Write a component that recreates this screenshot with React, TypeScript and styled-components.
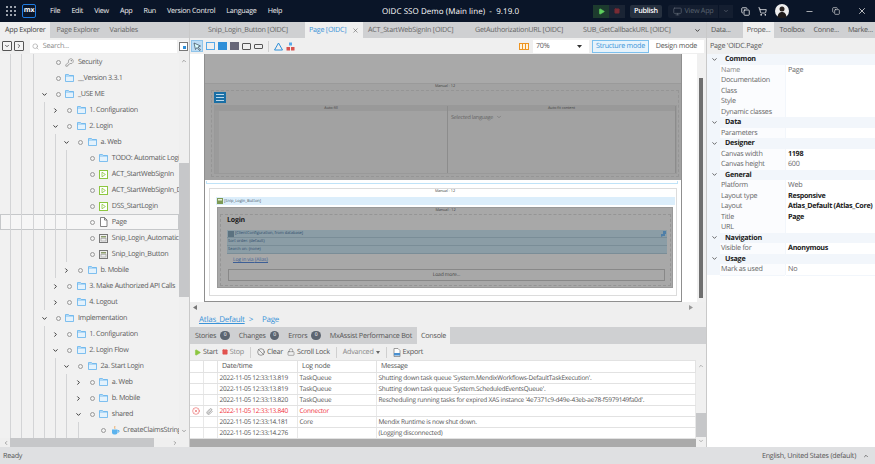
import styled, { createGlobalStyle } from 'styled-components';
import {
  Ban,
  ChevronDown,
  ChevronRight,
  ChevronUp,
  ChevronLeft,
  CircleX,
  Copy,
  KeyRound,
  Lock,
  Minus,
  Monitor,
  Paperclip,
  Play,
  Search,
  ShoppingCart,
  Square,
  X,
} from 'lucide-react';

const GlobalStyle = createGlobalStyle`
  html, body { margin: 0; padding: 0; background: #dfe0e2; }
  * { box-sizing: border-box; }
  body {
    font-family: 'Open Sans', 'Noto Sans', sans-serif;
    font-size: 7.2px;
    letter-spacing: -0.25px;
    color: #555;
    text-rendering: geometricPrecision;
  }
`;

type IconKind = 'folder' | 'flow' | 'page' | 'snip' | 'key' | 'java';

interface TreeRowData {
  depth: number;
  label: string;
  icon: IconKind;
  chevron?: 'down' | 'right';
  selected?: boolean;
}

const treeRows: TreeRowData[] = [
  { depth: 3, label: 'Security', icon: 'key' },
  { depth: 3, label: '__Version 3.3.1', icon: 'folder' },
  { depth: 3, label: '_USE ME', icon: 'folder', chevron: 'down' },
  { depth: 4, label: '1. Configuration', icon: 'folder', chevron: 'right' },
  { depth: 4, label: '2. Login', icon: 'folder', chevron: 'down' },
  { depth: 5, label: 'a. Web', icon: 'folder', chevron: 'down' },
  { depth: 6, label: 'TODO: Automatic Login', icon: 'folder' },
  { depth: 6, label: 'ACT_StartWebSignIn', icon: 'flow' },
  { depth: 6, label: 'ACT_StartWebSignIn_DeepLink', icon: 'flow' },
  { depth: 6, label: 'DSS_StartLogin', icon: 'flow' },
  { depth: 6, label: 'Page', icon: 'page', selected: true },
  { depth: 6, label: 'Snip_Login_Automatic', icon: 'snip' },
  { depth: 6, label: 'Snip_Login_Button', icon: 'snip' },
  { depth: 5, label: 'b. Mobile', icon: 'folder', chevron: 'right' },
  { depth: 4, label: '3. Make Authorized API Calls', icon: 'folder', chevron: 'right' },
  { depth: 4, label: '4. Logout', icon: 'folder', chevron: 'right' },
  { depth: 3, label: 'Implementation', icon: 'folder', chevron: 'down' },
  { depth: 4, label: '1. Configuration', icon: 'folder', chevron: 'right' },
  { depth: 4, label: '2. Login Flow', icon: 'folder', chevron: 'down' },
  { depth: 5, label: '2a. Start Login', icon: 'folder', chevron: 'down' },
  { depth: 6, label: 'a. Web', icon: 'folder', chevron: 'right' },
  { depth: 6, label: 'b. Mobile', icon: 'folder', chevron: 'right' },
  { depth: 6, label: 'shared', icon: 'folder', chevron: 'down' },
  { depth: 7, label: 'CreateClaimsString', icon: 'java' },
];

const propertySections = [
  {
    title: 'Common',
    rows: [
      ['Name', 'Page', ''],
      ['Documentation', '', ''],
      ['Class', '', ''],
      ['Style', '', ''],
      ['Dynamic classes', '', ''],
    ],
  },
  { title: 'Data', rows: [['Parameters', '', '']] },
  {
    title: 'Designer',
    rows: [
      ['Canvas width', '1198', 'bold'],
      ['Canvas height', '600', ''],
    ],
  },
  {
    title: 'General',
    rows: [
      ['Platform', 'Web', ''],
      ['Layout type', 'Responsive', 'bold'],
      ['Layout', 'Atlas_Default (Atlas_Core)', 'bold'],
      ['Title', 'Page', 'bold'],
      ['URL', '', ''],
    ],
  },
  { title: 'Navigation', rows: [['Visible for', 'Anonymous', 'bold']] },
  { title: 'Usage', rows: [['Mark as used', 'No', '']] },
];

const logRows = [
  ['2022-11-05 12:33:13.819', 'TaskQueue', "Shutting down task queue 'System.MendixWorkflows-DefaultTaskExecution'."],
  ['2022-11-05 12:33:13.819', 'TaskQueue', "Shutting down task queue 'System.ScheduledEventsQueue'."],
  ['2022-11-05 12:33:13.820', 'TaskQueue', "Rescheduling running tasks for expired XAS instance '4e7371c9-d49e-43eb-ae78-f5979149fa0d'."],
  ['2022-11-05 12:33:13.840', 'Connector', ''],
  ['2022-11-05 12:33:14.181', 'Core', 'Mendix Runtime is now shut down.'],
  ['2022-11-05 12:33:14.276', '', '(Logging disconnected)'],
];

function TreeIcon({ kind }: { kind: IconKind }) {
  if (kind === 'key') return <KeyRound size={9} color="#666" strokeWidth={1.4} />;
  if (kind === 'flow') {
    return (
      <svg width="9" height="9" viewBox="0 0 9 9">
        <rect x="0.5" y="0.5" width="8" height="8" fill="#fff" stroke="#8cc63f" />
        <path d="M3 2.2 L6.4 4.5 L3 6.8 Z" fill="none" stroke="#8cc63f" strokeWidth="0.8" />
      </svg>
    );
  }
  if (kind === 'page') {
    return (
      <svg width="9" height="10" viewBox="0 0 9 10">
        <path d="M1.500.5h4l2.500 2.500v6.500h-6.500z" fill="#fff" stroke="#666" strokeWidth="0.8" />
        <path d="M5.500.5v2.500h2.500" fill="none" stroke="#666" strokeWidth="0.8" />
      </svg>
    );
  }
  if (kind === 'snip') {
    return (
      <svg width="9" height="9" viewBox="0 0 9 9">
        <rect x="0.500" y="0.500" width="8" height="8" fill="#eee" stroke="#777" />
        <rect x="2" y="2" width="5" height="1.500" fill="#8a9a6a" />
        <rect x="2" y="4.500" width="5" height="2.500" fill="none" stroke="#999" strokeWidth="0.600" />
      </svg>
    );
  }
  if (kind === 'java') {
    return (
      <svg width="9" height="10" viewBox="0 0 9 10">
        <path d="M1 4.500h5.500v3a2 2 0 0 1-2 2h-1.500a2 2 0 0 1-2-2z" fill="#5cb3ee" />
        <path d="M6.500 5.500h1.500v1.500h-1.500" fill="none" stroke="#5cb3ee" />
        <path d="M3.500 1c1 1-.5 1.500.5 2.800" fill="none" stroke="#e9973a" strokeWidth="0.800" />
      </svg>
    );
  }
  return (
    <svg width="9" height="8" viewBox="0 0 9 8">
      <path d="M.5.500h3l.800 1h4.200v6h-8z" fill="#e4f2fc" stroke="#62b3ee" strokeWidth="0.800" />
      <path d="M.5 2h8" stroke="#62b3ee" strokeWidth="0.800" />
    </svg>
  );
}

function TreeRow({ row }: { row: TreeRowData }) {
  return (
    <Row $selected={row.selected}>
      {Array.from({ length: row.depth }, (_, i) => (
        <Guide key={i} />
      ))}
      <Twist>
        {row.chevron === 'down' && <ChevronDown size={7} color="#222" strokeWidth={3} />}
        {row.chevron === 'right' && <ChevronRight size={7} color="#222" strokeWidth={3} />}
      </Twist>
      <Dot />
      <RowIcon>
        <TreeIcon kind={row.icon} />
      </RowIcon>
      <RowLabel>{row.label}</RowLabel>
    </Row>
  );
}

export default function App() {
  return (
    <Shell>
      <GlobalStyle />
      <TitleBar>
        <Waffle>
          {Array.from({ length: 9 }, (_, i) => (
            <i key={i} />
          ))}
        </Waffle>
        <Logo>mx</Logo>
        <Menu>
          {['File', 'Edit', 'View', 'App', 'Run', 'Version Control', 'Language', 'Help'].map((m) => (
            <span key={m}>{m}</span>
          ))}
        </Menu>
        <AppTitle>OIDC SSO Demo (Main line)&nbsp; -&nbsp; 9.19.0</AppTitle>
        <RunGroup>
          <RunButton $tone="#1d3b2e">
            <Play size={7} color="#5ed05e" fill="#5ed05e" />
          </RunButton>
          <RunButton $tone="#1a2434">
            <Square size={6} color="#7a2c35" fill="#7a2c35" />
          </RunButton>
        </RunGroup>
        <Publish>Publish</Publish>
        <ViewApp>
          <Monitor size={9} color="#59626f" />
          View App
        </ViewApp>
        <ViewAppArrow>
          <ChevronDown size={6} color="#59626f" strokeWidth={3} />
        </ViewAppArrow>
        <TitleIcons>
          <Copy size={9} color="#fff" />
          <ShoppingCart size={9} color="#fff" />
          <Avatar>
            <svg width="14" height="14" viewBox="0 0 14 14">
              <circle cx="7" cy="7" r="7" fill="#eee" />
              <circle cx="7" cy="5" r="2.500" fill="#2a2320" />
              <path d="M2.500 13c.5-4 2.500-5 4.500-5s4 1 4.500 5a7 7 0 0 1-9 0z" fill="#1e1a1a" />
            </svg>
          </Avatar>
        </TitleIcons>
        <WindowButtons>
          <Minus size={9} color="#ddd" />
          <Copy size={8} color="#ddd" />
          <X size={10} color="#ddd" />
        </WindowButtons>
      </TitleBar>

      <Workspace>
        <LeftPanel>
          <TabStrip>
            <PanelTab $active>App Explorer</PanelTab>
            <PanelTab>Page Explorer</PanelTab>
            <PanelTab>Variables</PanelTab>
          </TabStrip>
          <ExplorerTools>
            <SquareTool>
              <ChevronDown size={6} color="#333" strokeWidth={3} />
            </SquareTool>
            <SquareTool>
              <ChevronRight size={6} color="#333" strokeWidth={3} />
            </SquareTool>
            <SearchBox>
              <Search size={7} color="#999" />
              Search...
            </SearchBox>
            <SquareTool $flat>
              <svg width="9" height="9" viewBox="0 0 9 9">
                <rect x="0.500" y="0.500" width="8" height="8" fill="#fff" stroke="#777" />
                <rect x="4" y="4" width="3" height="3" fill="#2f8fd8" />
              </svg>
            </SquareTool>
          </ExplorerTools>
          <TreeArea>
            <TreeList>
              {treeRows.map((row, i) => (
                <TreeRow key={i} row={row} />
              ))}
            </TreeList>
            <TreeScroll>
              <ChevronUp size={6} color="#555" />
              <TreeThumb />
              <ChevronDown size={6} color="#555" />
            </TreeScroll>
          </TreeArea>
          <TreeHScroll>
            <ChevronLeft size={6} color="#555" />
            <TreeHThumb />
            <ChevronRight size={6} color="#555" />
          </TreeHScroll>
        </LeftPanel>

        <CenterPanel>
          <TabStrip>
            <DocTab $width={115} $pad={18}>Snip_Login_Button [OIDC]</DocTab>
            <DocTab $active $width={58} $pad={4}>
              Page [OIDC]
              <X size={7} color="#666" />
            </DocTab>
            <DocTab $width={112} $pad={5}>ACT_StartWebSignIn [OIDC]</DocTab>
            <DocTab $width={108} $pad={0}>GetAuthorizationURL [OIDC]</DocTab>
            <DocTab $width={100} $pad={0}>SUB_GetCallbackURL [OIDC]</DocTab>
            <TabMenu>
              <ChevronDown size={7} color="#333" strokeWidth={3} />
            </TabMenu>
          </TabStrip>
          <CanvasTools>
            <ToolPick>
              <svg width="9" height="9" viewBox="0 0 9 9">
                <path d="M1 1l6.500 3-2.500 1 2.500 3-1 .5-2.500-3-1.500 2z" fill="#dff" stroke="#345" strokeWidth="0.700" />
              </svg>
            </ToolPick>
            <ToolGlyph $color="#56a9ea" />
            <ToolGlyph $color="#2f8fd8" $filled />
            <ToolGlyph $color="#667" $filled />
            <ToolGlyph $color="#555" $wide />
            <ToolGlyph $color="#555" $wide $low />
            <ToolSep />
            <svg width="9" height="9" viewBox="0 0 9 9">
              <path d="M4.500 1L8.500 8H.5z" fill="none" stroke="#2f8fd8" strokeWidth="1" />
            </svg>
            <svg width="9" height="9" viewBox="0 0 9 9">
              <rect x="3" y="0.500" width="3" height="3" fill="#56a9ea" />
              <rect x="0.500" y="5" width="3.500" height="3.500" fill="#d8534f" />
              <rect x="5" y="5" width="3.500" height="3.500" fill="#d8534f" />
            </svg>
            <ToolSpacer />
            <svg width="10" height="7" viewBox="0 0 10 7">
              <rect x="0.500" y="0.500" width="9" height="6" fill="#fff3dd" stroke="#ee9420" />
              <path d="M3.500 1v5M6.500 1v5" stroke="#ee9420" />
            </svg>
            <ZoomSelect>
              70%
              <svg width="5" height="3" viewBox="0 0 5 3">
                <path d="M0 0h5L2.500 3z" fill="#333" />
              </svg>
            </ZoomSelect>
            <ModeButton $active>Structure mode</ModeButton>
            <ModeButton>Design mode</ModeButton>
          </CanvasTools>

          <CanvasFrame>
            <CanvasViewport>
              <PageFrame>
                <DimHeader />
                <DimSection>
                  <TinyLabel>Manual - 12</TinyLabel>
                  <DashedBox>
                    <MenuButton>
                      <i />
                      <i />
                      <i />
                    </MenuButton>
                    <AutoGrid>
                      <AutoCell $inset>
                        <TinyLabel $bar>Auto-fill</TinyLabel>
                      </AutoCell>
                      <AutoCell>
                        <TinyLabel $bar>Auto-fit content</TinyLabel>
                        <LanguageText>
                          Selected language <ChevronDown size={6} color="#666" />
                        </LanguageText>
                      </AutoCell>
                    </AutoGrid>
                  </DashedBox>
                </DimSection>
                <LightSection>
                  <BlueStrip />
                  <LightInner>
                    <TinyLabel>Manual - 12</TinyLabel>
                    <SnippetBar>
                      <svg width="6" height="6" viewBox="0 0 6 6">
                        <rect width="6" height="6" fill="#7d9a55" />
                        <rect x="1" y="1" width="4" height="1.500" fill="#e8f0d8" />
                      </svg>
                      [Snip_Login_Button]
                    </SnippetBar>
                    <LoginBox>
                      <TinyLabel>Manual - 12</TinyLabel>
                      <LoginBody>
                        <LoginTitle>Login</LoginTitle>
                        <div>
                          <ListLine>
                            <svg width="6" height="6" viewBox="0 0 6 6">
                              <rect width="6" height="6" fill="#5b7280" />
                            </svg>
                            [ClientConfiguration, from database]
                            <ListTool width="6" height="6" viewBox="0 0 6 6">
                              <path d="M3 0h3v3h-1v2h-2l-2 1v-3h2z" fill="#4f7fa8" />
                            </ListTool>
                          </ListLine>
                          <ListLine>Sort order: (default)</ListLine>
                          <ListLine>Search on: (none)</ListLine>
                        </div>
                        <LoginLink>Log in via {'{Alias}'}</LoginLink>
                        <LoadMore>Load more...</LoadMore>
                      </LoginBody>
                    </LoginBox>
                  </LightInner>
                </LightSection>
              </PageFrame>
            </CanvasViewport>
            <CanvasVScroll>
              <CanvasThumb />
            </CanvasVScroll>
          </CanvasFrame>
          <CanvasHScroll>
            <svg width="4" height="5" viewBox="0 0 4 5">
              <path d="M4 0v5L0 2.500z" fill="#777" />
            </svg>
            <svg width="4" height="5" viewBox="0 0 4 5">
              <path d="M0 0v5l4-2.500z" fill="#999" />
            </svg>
          </CanvasHScroll>

          <Breadcrumb>
            <a>Atlas_Default</a>
            <span>&gt;</span>
            <a>Page</a>
          </Breadcrumb>
          <BottomTabs>
            <BottomTab>Stories<CountBadge>0</CountBadge></BottomTab>
            <BottomTab>Changes<CountBadge>0</CountBadge></BottomTab>
            <BottomTab>Errors<CountBadge>0</CountBadge></BottomTab>
            <BottomTab>MxAssist Performance Bot</BottomTab>
            <BottomTab $active>Console</BottomTab>
          </BottomTabs>
          <ConsoleTools>
            <ConsoleTool><Play size={7} color="#8cc63f" fill="#8cc63f" />Start</ConsoleTool>
            <ConsoleTool $muted><Square size={6} color="#e2534f" fill="#e2534f" />Stop</ConsoleTool>
            <ToolSep />
            <ConsoleTool><Ban size={8} color="#444" strokeWidth={1.500} />Clear</ConsoleTool>
            <ConsoleTool><Lock size={8} color="#666" strokeWidth={1.500} />Scroll Lock</ConsoleTool>
            <ToolSep />
            <ConsoleTool $muted>
              Advanced
              <svg width="4" height="3" viewBox="0 0 4 3">
                <path d="M0 0h4L2 3z" fill="#666" />
              </svg>
            </ConsoleTool>
            <ToolSep />
            <ConsoleTool>
              <svg width="8" height="9" viewBox="0 0 8 9">
                <path d="M1 .5h4l2 2v6h-6z" fill="#fff" stroke="#777" strokeWidth="0.700" />
                <rect x="1" y="5" width="6" height="2.500" fill="#4a90d0" />
              </svg>
              Export
            </ConsoleTool>
          </ConsoleTools>
          <LogArea>
            <LogTable>
              <LogHeader>
                <span />
                <span />
                <span>Date/time</span>
                <span>Log node</span>
                <span>Message</span>
              </LogHeader>
              {logRows.map((r, i) => (
                <LogRow key={i} $error={r[1] === 'Connector'}>
                  <span>{r[1] === 'Connector' && <CircleX size={8} color="#e23b3b" strokeWidth={1.500} />}</span>
                  <span>{r[1] === 'Connector' && <Paperclip size={7} color="#777" />}</span>
                  <span>{r[0]}</span>
                  <span>{r[1]}</span>
                  <span>{r[2]}</span>
                </LogRow>
              ))}
              <LogHBar />
            </LogTable>
            <LogVScroll>
              <ChevronUp size={6} color="#777" />
              <LogThumb />
              <ChevronDown size={6} color="#777" />
            </LogVScroll>
          </LogArea>
        </CenterPanel>

        <RightPanel>
          <TabStrip>
            <SideTab>Data...</SideTab>
            <SideTab $active>Prope...</SideTab>
            <SideTab>Toolbox</SideTab>
            <SideTab>Conne...</SideTab>
            <SideTab>Marke...</SideTab>
          </TabStrip>
          <PropsTitle>Page 'OIDC.Page'</PropsTitle>
          {propertySections.map((section) => (
            <div key={section.title}>
              <SectionHead>
                <ChevronDown size={7} color="#333" strokeWidth={2.500} />
                {section.title}
              </SectionHead>
              {section.rows.map((r) => (
                <PropRow key={r[0]}>
                  <PropName $dim={r[0] === 'Name'}>{r[0]}</PropName>
                  <PropValue $bold={r[2] === 'bold'}>{r[1]}</PropValue>
                </PropRow>
              ))}
            </div>
          ))}
        </RightPanel>
      </Workspace>

      <StatusBar>
        Ready
        <StatusRight>
          English, United States (default)
          <ChevronUp size={6} color="#555" strokeWidth={3} />
        </StatusRight>
      </StatusBar>
    </Shell>
  );
}

const Shell = styled.div`
  width: 875px;
  height: 464px;
  display: flex;
  flex-direction: column;
  overflow: hidden;
`;

const TitleBar = styled.header`
  height: 22px;
  flex: none;
  position: relative;
  display: flex;
  align-items: center;
  padding-left: 6px;
  background: #0a1528;
  color: #fff;
`;

const Waffle = styled.div`
  display: grid;
  grid-template-columns: repeat(3, 2px);
  gap: 2px;
  i {
    width: 2px;
    height: 2px;
    border-radius: 50%;
    background: #cfd3da;
  }
`;

const Logo = styled.div`
  width: 14px;
  height: 14px;
  margin-left: 6px;
  border: 1px solid #1f7be0;
  border-radius: 2px;
  font-size: 7px;
  font-weight: 700;
  line-height: 11px;
  text-align: center;
  color: #fff;
`;

const Menu = styled.nav`
  display: flex;
  gap: 11px;
  margin-left: 14px;
  color: #f0f0f0;
`;

const AppTitle = styled.div`
  position: absolute;
  left: 382px;
  top: 6px;
  font-size: 8px;
  letter-spacing: 0.05px;
  white-space: nowrap;
`;

const RunGroup = styled.div`
  display: flex;
  margin-left: auto;
`;

const RunButton = styled.div<{ $tone: string }>`
  width: 16px;
  height: 13px;
  display: flex;
  align-items: center;
  justify-content: center;
  background: ${(p) => p.$tone};
`;

const Publish = styled.div`
  width: 32px;
  height: 13px;
  margin-left: 5px;
  border-radius: 2px;
  background: #26303f;
  font-weight: 600;
  line-height: 13px;
  text-align: center;
`;

const ViewApp = styled.div`
  width: 50px;
  height: 13px;
  margin-left: 6px;
  display: flex;
  align-items: center;
  justify-content: center;
  gap: 3px;
  border-radius: 2px 0 0 2px;
  background: #141e30;
  color: #59626f;
`;

const ViewAppArrow = styled.div`
  width: 14px;
  height: 13px;
  margin-left: 1px;
  display: flex;
  align-items: center;
  justify-content: center;
  background: #141e30;
`;

const TitleIcons = styled.div`
  display: flex;
  align-items: center;
  gap: 8px;
  margin-left: 8px;
`;

const Avatar = styled.div`
  width: 14px;
  height: 14px;
  svg {
    display: block;
  }
`;

const WindowButtons = styled.div`
  width: 78px;
  margin-left: 8px;
  padding: 0 8px;
  display: flex;
  align-items: center;
  justify-content: space-between;
`;

const Workspace = styled.main`
  flex: 1;
  min-height: 0;
  display: flex;
`;

const TabStrip = styled.div`
  height: 16px;
  flex: none;
  display: flex;
  background: #cfd0d2;
`;

const PanelTab = styled.div<{ $active?: boolean }>`
  padding: 0 5px;
  margin-right: ${(p) => (p.$active ? '1px' : '0')};
  line-height: 16px;
  white-space: nowrap;
  color: ${(p) => (p.$active ? '#444' : '#666')};
  background: ${(p) => (p.$active ? '#efefef' : 'transparent')};
`;

const LeftPanel = styled.aside`
  width: 190px;
  flex: none;
  display: flex;
  flex-direction: column;
  background: #f1f1f1;
  border-right: 1px solid #c9c9c9;
`;

const ExplorerTools = styled.div`
  height: 16px;
  flex: none;
  display: flex;
  align-items: center;
  gap: 1px;
  padding-left: 2px;
  background: #efefef;
`;

const SquareTool = styled.div<{ $flat?: boolean }>`
  width: 10px;
  height: 10px;
  display: flex;
  align-items: center;
  justify-content: center;
  margin-right: 1px;
  border: ${(p) => (p.$flat ? '0' : '1px solid #555')};
  border-radius: 1px;
  background: #f4f4f4;
`;

const SearchBox = styled.div`
  width: 149px;
  height: 13px;
  margin-left: 4px;
  padding-left: 2px;
  display: flex;
  align-items: center;
  gap: 4px;
  background: #fff;
  color: #888;
`;

const TreeArea = styled.div`
  flex: 1;
  min-height: 0;
  display: flex;
  overflow: hidden;
`;

const TreeList = styled.div`
  width: 179px;
  flex: none;
  overflow: hidden;
`;

const Row = styled.div<{ $selected?: boolean }>`
  height: 16px;
  display: flex;
  align-items: center;
  padding-left: 10px;
  white-space: nowrap;
  overflow: hidden;
  background: ${(p) => (p.$selected ? '#f6f6f6' : 'transparent')};
  box-shadow: ${(p) => (p.$selected ? 'inset 0 0 0 1px #c6c8ca' : 'none')};
`;

const Guide = styled.span`
  width: 11.300px;
  height: 100%;
  flex: none;
  border-left: 1px solid #d3d4d6;
`;

const Twist = styled.span`
  width: 9px;
  margin-left: -4px;
  flex: none;
  display: flex;
  justify-content: center;
`;

const Dot = styled.span`
  width: 5px;
  height: 5px;
  margin-left: 7px;
  flex: none;
  border: 1px solid #999;
  border-radius: 50%;
`;

const RowIcon = styled.span`
  width: 10px;
  margin-left: 4px;
  flex: none;
  display: flex;
  justify-content: center;
`;

const RowLabel = styled.span`
  margin-left: 3px;
  letter-spacing: -0.32px;
  color: #5c5c5c;
`;

const TreeScroll = styled.div`
  width: 10px;
  flex: none;
  display: flex;
  flex-direction: column;
  align-items: center;
  padding-top: 4px;
  background: #efefef;
`;

const TreeThumb = styled.div`
  width: 10px;
  height: 134px;
  margin: 99px 0 131px;
  flex: none;
  background: #c6c7c9;
`;

const TreeHScroll = styled.div`
  height: 9px;
  flex: none;
  display: flex;
  align-items: center;
  padding: 0 11px 0 3px;
  background: #efefef;
`;

const TreeHThumb = styled.div`
  width: 144px;
  height: 9px;
  margin: 0 auto 0 1px;
  background: #c6c7c9;
`;

const CenterPanel = styled.section`
  width: 516px;
  flex: none;
  display: flex;
  flex-direction: column;
  background: #efefef;
`;

const DocTab = styled.div<{ $active?: boolean; $width: number; $pad: number }>`
  width: ${(p) => p.$width}px;
  padding-left: ${(p) => p.$pad}px;
  flex: none;
  display: flex;
  align-items: center;
  gap: 6px;
  white-space: nowrap;
  color: ${(p) => (p.$active ? '#3a93d8' : '#666')};
  background: ${(p) => (p.$active ? '#efefef' : 'transparent')};
`;

const TabMenu = styled.div`
  margin-left: auto;
  margin-right: 5px;
  display: flex;
  align-items: center;
`;

const CanvasTools = styled.div`
  height: 16px;
  flex: none;
  display: flex;
  align-items: center;
  gap: 3px;
  padding: 0 2px 0 1px;
`;

const ToolPick = styled.div`
  width: 12px;
  height: 12px;
  display: flex;
  align-items: center;
  justify-content: center;
  background: #bcdcf4;
  border: 1px solid #8fc4ea;
`;

const ToolGlyph = styled.div<{ $color: string; $filled?: boolean; $wide?: boolean; $low?: boolean }>`
  width: 9px;
  height: ${(p) => (p.$low ? '5px' : p.$wide ? '7px' : '8px')};
  border: 1px solid ${(p) => p.$color};
  border-radius: ${(p) => (p.$wide ? '1px' : '0')};
  background: ${(p) => (p.$filled ? p.$color : 'transparent')};
`;

const ToolSep = styled.div`
  width: 1px;
  height: 11px;
  margin: 0 2px;
  background: #d0d0d0;
`;

const ToolSpacer = styled.div`
  flex: 1;
`;

const ZoomSelect = styled.div`
  width: 56px;
  height: 13px;
  margin-left: 1px;
  padding: 0 7px 0 3px;
  display: flex;
  align-items: center;
  justify-content: space-between;
  background: #fff;
  color: #555;
`;

const ModeButton = styled.div<{ $active?: boolean }>`
  width: ${(p) => (p.$active ? '57px' : '55px')};
  height: 13px;
  margin-left: ${(p) => (p.$active ? '0' : '-3px')};
  line-height: 11px;
  text-align: center;
  white-space: nowrap;
  color: ${(p) => (p.$active ? '#3a93d8' : '#555')};
  background: ${(p) => (p.$active ? '#e6f3fc' : '#fff')};
  border: 1px solid ${(p) => (p.$active ? '#7cc0ee' : '#fff')};
`;

const CanvasFrame = styled.div`
  height: 248px;
  flex: none;
  display: flex;
`;

const CanvasViewport = styled.div`
  width: 507px;
  flex: none;
  padding-left: 14px;
  overflow: hidden;
  background: #fff;
`;

const PageFrame = styled.div`
  width: 478px;
  height: 248px;
  display: flex;
  flex-direction: column;
  border: 1px solid #8f8f8f;
  border-top: 0;
`;

const DimHeader = styled.div`
  height: 30px;
  flex: none;
  background: #a9a9a9;
  border-bottom: 1px solid #9a9a9a;
`;

const DimSection = styled.div`
  height: 96px;
  flex: none;
  padding: 0 2px 2px 6px;
  background: #a2a2a2;
`;

const TinyLabel = styled.div<{ $bar?: boolean }>`
  height: ${(p) => (p.$bar ? '5px' : '6px')};
  font-size: 3.800px;
  letter-spacing: -0.05px;
  line-height: ${(p) => (p.$bar ? '5px' : '6px')};
  text-align: center;
  white-space: nowrap;
  color: #444;
  background: ${(p) => (p.$bar ? '#999' : 'transparent')};
`;

const DashedBox = styled.div`
  height: 87px;
  padding: 1px 1px 0 2px;
  border: 1px dashed #959595;
`;

const MenuButton = styled.div`
  width: 12px;
  height: 11px;
  margin-bottom: 2px;
  padding: 2px;
  display: flex;
  flex-direction: column;
  justify-content: space-between;
  background: #1a6fa5;
  i {
    height: 1px;
    background: #bcd8ea;
  }
`;

const AutoGrid = styled.div`
  height: 69px;
  display: grid;
  grid-template-columns: 233px 1fr;
  border: 1px solid #999;
`;

const AutoCell = styled.div<{ $inset?: boolean }>`
  border-right: 1px solid #8c8c8c;
  box-shadow: ${(p) => (p.$inset ? 'inset 4px 0 0 #9b9b9b' : 'none')};
`;

const LanguageText = styled.div`
  padding: 2px 3px;
  display: flex;
  align-items: center;
  gap: 3px;
  font-size: 5.500px;
  color: #666;
`;

const LightSection = styled.div`
  flex: 1;
  padding: 1px 1px 0;
  background: #fff;
`;

const BlueStrip = styled.div`
  height: 3px;
  margin-right: 2px;
  border: 1px solid #bfe3f8;
  border-top: 0;
  background: #fff;
`;

const LightInner = styled.div`
  height: 108px;
  margin: 4px 3px 0 3px;
  padding: 0 1px 0 5px;
  border: 1px solid #dcdcdc;
`;

const SnippetBar = styled.div`
  height: 8px;
  margin: 2px 0 0 1px;
  padding-left: 1px;
  display: flex;
  align-items: center;
  gap: 1px;
  font-size: 4px;
  letter-spacing: 0;
  color: #456;
  background: #dceefb;
`;

const LoginBox = styled.div`
  height: 81px;
  margin: 2px 2px 0 2px;
  padding: 0 1px 0 2px;
  border: 1px solid #999;
  background: #a8a8a8;
`;

const LoginBody = styled.div`
  height: 72px;
  padding: 0 3px 0 6px;
  border: 1px dashed #959595;
`;

const LoginTitle = styled.div`
  height: 15px;
  font-size: 7px;
  font-weight: 700;
  letter-spacing: -0.2px;
  line-height: 12px;
  color: #1c1c1c;
`;

const ListLine = styled.div`
  height: 8px;
  padding-left: 1px;
  display: flex;
  align-items: center;
  gap: 1px;
  font-size: 4px;
  letter-spacing: 0;
  color: #2c4a6a;
  background: #8b9da6;
  border-bottom: 1px solid #7a8d97;
`;

const ListTool = styled.svg`
  margin-left: auto;
  margin-right: 1px;
`;

const LoginLink = styled.div`
  margin: 3px 0 0 6px;
  font-size: 5px;
  letter-spacing: -0.15px;
  line-height: 7px;
  color: #3d5f96;
  text-decoration: underline;
`;

const LoadMore = styled.div`
  height: 12px;
  margin: 5px 2px 0 1px;
  border: 1px solid #888;
  font-size: 5px;
  letter-spacing: -0.15px;
  line-height: 10px;
  text-align: center;
  color: #444;
`;

const CanvasVScroll = styled.div`
  width: 9px;
  flex: none;
  padding: 24px 3px 0 2px;
  background: #f0f0f0;
`;

const CanvasThumb = styled.div`
  height: 220px;
  background: #6f6f6f;
`;

const CanvasHScroll = styled.div`
  height: 10px;
  flex: none;
  padding: 0 13px 0 3px;
  display: flex;
  align-items: center;
  justify-content: space-between;
`;

const Breadcrumb = styled.div`
  height: 15px;
  flex: none;
  padding-left: 9px;
  display: flex;
  align-items: center;
  gap: 4px;
  font-size: 8px;
  color: #3a93d8;
  a {
    text-decoration: underline;
  }
  a:last-child {
    margin-left: 5px;
    text-decoration: none;
  }
`;

const BottomTabs = styled.div`
  height: 17px;
  flex: none;
  display: flex;
  background: #cfd0d2;
  padding-left: 1px;
`;

const BottomTab = styled.div<{ $active?: boolean }>`
  padding: 0 4px;
  margin-right: ${(p) => (p.$active ? '0' : '1px')};
  display: flex;
  align-items: center;
  gap: 4px;
  white-space: nowrap;
  color: #555;
  background: ${(p) => (p.$active ? '#efefef' : 'transparent')};
`;

const CountBadge = styled.span`
  width: 9.500px;
  height: 9.500px;
  border-radius: 50%;
  background: #5b6470;
  color: #fff;
  font-size: 5px;
  line-height: 9.500px;
  text-align: center;
`;

const ConsoleTools = styled.div`
  height: 16px;
  flex: none;
  display: flex;
  align-items: center;
  gap: 4px;
  padding-left: 4px;
`;

const ConsoleTool = styled.div<{ $muted?: boolean }>`
  display: flex;
  align-items: center;
  gap: 2px;
  white-space: nowrap;
  color: ${(p) => (p.$muted ? '#888' : '#555')};
`;

const LogArea = styled.div`
  flex: 1;
  min-height: 0;
  display: flex;
`;

const LogTable = styled.div`
  flex: 1;
  min-width: 0;
  display: flex;
  flex-direction: column;
  background: #fff;
`;

const logColumns = '14px 14px 80px 79px 1fr';

const LogHeader = styled.div`
  height: 13px;
  flex: none;
  display: grid;
  grid-template-columns: ${logColumns};
  font-size: 7px;
  line-height: 12px;
  color: #555;
  border-bottom: 1px solid #e2e2e2;
  border-top: 1px solid #e2e2e2;
  span {
    padding-left: 4px;
    border-right: 1px solid #e2e2e2;
  }
`;

const LogRow = styled.div<{ $error?: boolean }>`
  height: 11px;
  flex: none;
  display: grid;
  grid-template-columns: ${logColumns};
  font-size: 6.500px;
  line-height: 10px;
  color: ${(p) => (p.$error ? '#f0313c' : '#555')};
  border-bottom: 1px solid #e2e2e2;
  span {
    padding-left: 1.500px;
    white-space: nowrap;
    display: flex;
    align-items: center;
    border-right: 1px solid #e8e8e8;
  }
`;

const LogHBar = styled.div`
  flex: 1;
  background: linear-gradient(#aaa, #aaa) bottom / 100% 8px no-repeat #fff;
`;

const LogVScroll = styled.div`
  width: 10px;
  flex: none;
  padding-top: 3px;
  display: flex;
  flex-direction: column;
  align-items: center;
  background: #f0f0f0;
`;

const LogThumb = styled.div`
  width: 10px;
  height: 24px;
  margin: 44px 0 1px;
  flex: none;
  background: #c6c7c9;
`;

const RightPanel = styled.aside`
  flex: 1;
  min-width: 0;
  background: #fff;
  border-left: 1px solid #c9c9c9;
`;

const SideTab = styled.div<{ $active?: boolean }>`
  padding: 0 4px;
  margin-right: 1px;
  margin-left: ${(p) => (p.$active ? '7px' : '0')};
  line-height: 16px;
  white-space: nowrap;
  color: #555;
  background: ${(p) => (p.$active ? '#efefef' : 'transparent')};
`;

const PropsTitle = styled.div`
  height: 16px;
  padding-left: 3px;
  line-height: 16px;
  color: #555;
  background: #efefef;
`;

const SectionHead = styled.div`
  height: 10.500px;
  display: flex;
  align-items: center;
  gap: 7px;
  padding-left: 4px;
  font-weight: 700;
  color: #222;
  background: #f2f6fb;
`;

const PropRow = styled.div`
  height: 10.500px;
  display: grid;
  grid-template-columns: 65px 1fr;
  padding-left: 13px;
  line-height: 10.500px;
  background: #f2f6fb;
`;

const PropName = styled.div<{ $dim?: boolean }>`
  padding-left: 1px;
  white-space: nowrap;
  color: ${(p) => (p.$dim ? '#888' : '#666')};
  background: #fbfcfe;
  border-bottom: 1px solid #f2f6fb;
`;

const PropValue = styled.div<{ $bold?: boolean }>`
  padding-left: 2px;
  white-space: nowrap;
  font-weight: ${(p) => (p.$bold ? 700 : 400)};
  letter-spacing: ${(p) => (p.$bold ? '-0.3px' : '-0.25px')};
  color: ${(p) => (p.$bold ? '#222' : '#666')};
  background: #fff;
  border-bottom: 1px solid #f2f6fb;
  margin-left: 1px;
`;

const StatusBar = styled.footer`
  height: 17px;
  flex: none;
  display: flex;
  align-items: center;
  justify-content: space-between;
  padding: 0 6px 0 3px;
  color: #555;
  background: #dfe0e2;
`;

const StatusRight = styled.div`
  display: flex;
  align-items: center;
  gap: 7px;
`;
